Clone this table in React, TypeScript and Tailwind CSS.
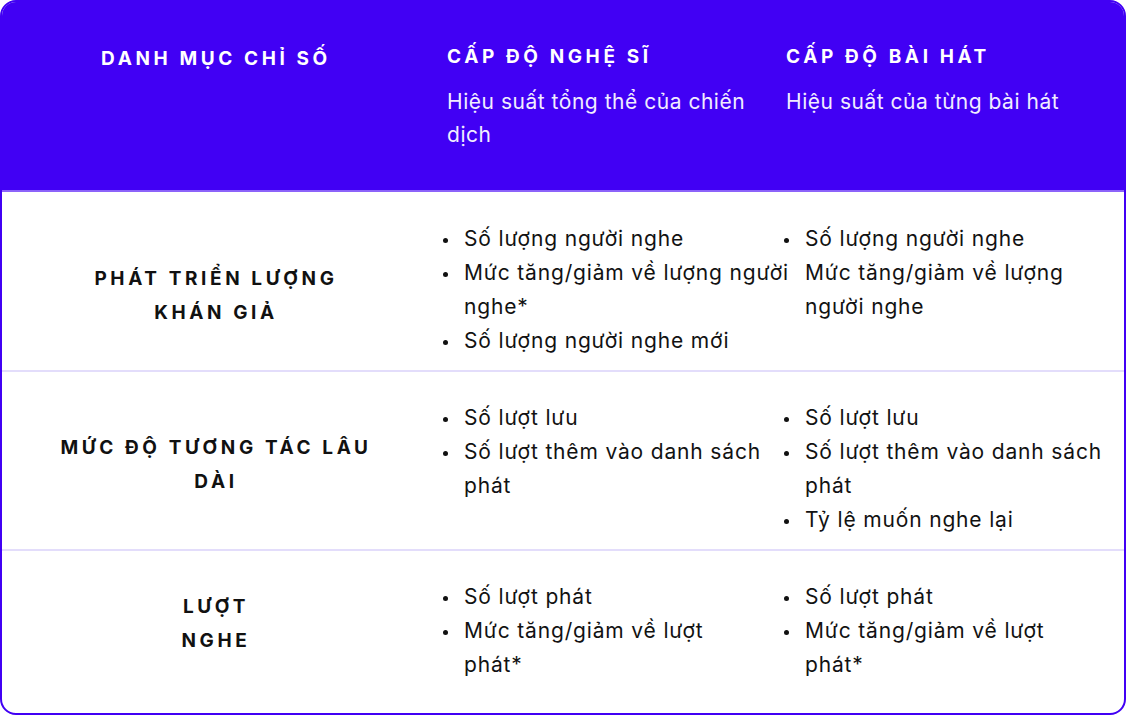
import React from "react";

const font = { fontFamily: "Inter, 'Noto Sans', sans-serif" };

function Bullet({ show = true }: { show?: boolean }) {
  return (
    <span className="relative ml-[-4px] flex h-[34px] w-[21px] shrink-0 items-center">
      {show && <span className="mt-[2px] block h-[5px] w-[5px] rounded-full bg-[#111]" />}
    </span>
  );
}

type Item = { lines: string[]; bullet?: boolean };

function List({ items }: { items: Item[] }) {
  return (
    <ul className="flex flex-col">
      {items.map((it, i) => (
        <li key={i} className="flex">
          <Bullet show={it.bullet !== false} />
          <span className="whitespace-nowrap text-[21px] leading-[34px] tracking-[0.04em] text-[#121212]">
            {it.lines.map((l, j) => (
              <React.Fragment key={j}>
                {j > 0 && <br />}
                {l}
              </React.Fragment>
            ))}
          </span>
        </li>
      ))}
    </ul>
  );
}

function Label({ lines, pt }: { lines: string[]; pt: string }) {
  return (
    <div className={`flex flex-col items-center ${pt}`}>
      {lines.map((l, i) => (
        <div key={i} className="text-[19px] font-bold uppercase leading-[34px] tracking-[0.19em] text-[#111]">
          {l}
        </div>
      ))}
    </div>
  );
}

export default function App() {
  return (
    <div className="h-[716px] w-[1128px] bg-white" style={font}>
      <div className="flex h-[715px] w-[1126px] flex-col overflow-hidden rounded-[16px] border-2 border-[#4100f4] bg-white">
        {/* Header */}
        <div className="grid h-[190px] shrink-0 grid-cols-[428px_339px_1fr] border-b-2 border-[#8c63fa] bg-[#4100f4] pt-[43px]">
          <div className="flex justify-center pt-[2px]">
            <div className="text-[19px] font-bold uppercase leading-[24px] tracking-[0.19em] text-white">DANH MỤC CHỈ SỐ</div>
          </div>
          <div className="pl-[17px]">
            <div className="text-[19px] font-bold uppercase leading-[24px] tracking-[0.19em] text-white">CẤP ĐỘ NGHỆ SĨ</div>
            <div className="mt-[16px] text-[21px] leading-[33px] tracking-[0.025em] text-[#f1edff]">
              Hiệu suất tổng thể của chiến
              <br />
              dịch
            </div>
          </div>
          <div className="pl-[17px]">
            <div className="text-[19px] font-bold uppercase leading-[24px] tracking-[0.19em] text-white">CẤP ĐỘ BÀI HÁT</div>
            <div className="mt-[16px] text-[21px] leading-[33px] tracking-[0.025em] text-[#f1edff]">Hiệu suất của từng bài hát</div>
          </div>
        </div>

        {/* Row 1 */}
        <div className="grid h-[180px] shrink-0 grid-cols-[428px_339px_1fr] border-b-2 border-[#e3ddfb]">
          <Label lines={["PHÁT TRIỂN LƯỢNG", "KHÁN GIẢ"]} pt="pt-[70px]" />
          <div className="pl-[17px] pt-[30px]">
            <List
              items={[
                { lines: ["Số lượng người nghe"] },
                { lines: ["Mức tăng/giảm về lượng người", "nghe*"] },
                { lines: ["Số lượng người nghe mới"] },
              ]}
            />
          </div>
          <div className="pl-[19px] pt-[30px]">
            <List
              items={[
                { lines: ["Số lượng người nghe"] },
                { lines: ["Mức tăng/giảm về lượng", "người nghe"], bullet: false },
              ]}
            />
          </div>
        </div>

        {/* Row 2 */}
        <div className="grid h-[179px] shrink-0 grid-cols-[428px_339px_1fr] border-b-2 border-[#e3ddfb]">
          <Label lines={["MỨC ĐỘ TƯƠNG TÁC LÂU", "DÀI"]} pt="pt-[59px]" />
          <div className="pl-[17px] pt-[29px]">
            <List
              items={[
                { lines: ["Số lượt lưu"] },
                { lines: ["Số lượt thêm vào danh sách", "phát"] },
              ]}
            />
          </div>
          <div className="pl-[19px] pt-[29px]">
            <List
              items={[
                { lines: ["Số lượt lưu"] },
                { lines: ["Số lượt thêm vào danh sách", "phát"] },
                { lines: ["Tỷ lệ muốn nghe lại"] },
              ]}
            />
          </div>
        </div>

        {/* Row 3 */}
        <div className="grid min-h-0 flex-1 grid-cols-[428px_339px_1fr]">
          <Label lines={["LƯỢT", "NGHE"]} pt="pt-[39px]" />
          <div className="pl-[17px] pt-[29px]">
            <List
              items={[
                { lines: ["Số lượt phát"] },
                { lines: ["Mức tăng/giảm về lượt", "phát*"] },
              ]}
            />
          </div>
          <div className="pl-[19px] pt-[29px]">
            <List
              items={[
                { lines: ["Số lượt phát"] },
                { lines: ["Mức tăng/giảm về lượt", "phát*"] },
              ]}
            />
          </div>
        </div>
      </div>
    </div>
  );
}
